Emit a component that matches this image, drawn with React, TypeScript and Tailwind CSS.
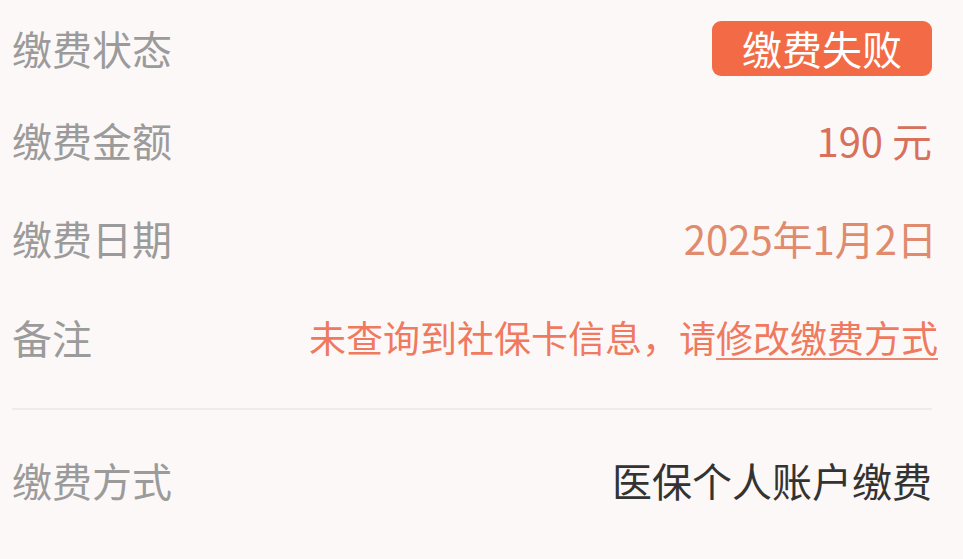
const font = { fontFamily: '"Noto Sans CJK SC", "Noto Sans", sans-serif' }

function Row({ label, h, children }: { label: string; h: string; children: React.ReactNode }) {
  return (
    <div className={`flex items-center justify-between ${h}`}>
      <span className="text-[40px] leading-none text-[#9b9b9b]">{label}</span>
      {children}
    </div>
  )
}

export default function App() {
  return (
    <div className="h-[559px] w-[963px] overflow-hidden bg-[#fcf8f7] pl-3 pr-[31px]" style={font}>
      <Row label="缴费状态" h="h-[96px]">
        <span className="flex h-[55px] w-[220px] items-center justify-center rounded-[9px] bg-[#f26b46] text-[40px] leading-none text-white">
          缴费失败
        </span>
      </Row>
      <Row label="缴费金额" h="h-[88px]">
        <span className="text-[40px] leading-none text-[#d8705a]">190 元</span>
      </Row>
      <Row label="缴费日期" h="h-[108px]">
        <span className="-mr-[5px] text-[40px] leading-none text-[#e08a6e]">2025年1月2日</span>
      </Row>
      <Row label="备注" h="h-[90px]">
        <span className="-mr-[6px] text-[37px] leading-none text-[#ef7a5f]">
          未查询到社保卡信息，请
          <span className="underline decoration-[#e8896f] decoration-2 underline-offset-[5px]">修改缴费方式</span>
        </span>
      </Row>
      <div className="mt-[26px] h-[2px] bg-[#efebea]" />
      <Row label="缴费方式" h="h-[140px]">
        <span className="text-[40px] leading-none text-[#333333]">医保个人账户缴费</span>
      </Row>
    </div>
  )
}
